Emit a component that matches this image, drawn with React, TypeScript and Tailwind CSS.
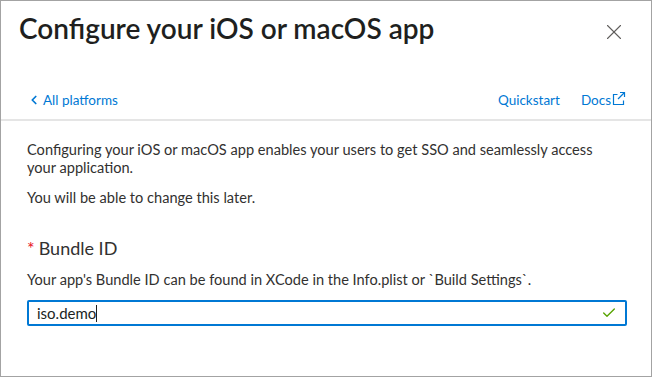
import { Check, ChevronLeft, X } from 'lucide-react';

function ExternalIcon() {
  return (
    <svg width="15" height="15" viewBox="0 0 15 15" fill="none" stroke="currentColor" strokeWidth="1.2">
      <path d="M6.5 3.5H2.5v10h10V9.5" />
      <path d="M9 1.5h4.5V6" />
      <path d="M13.5 1.5L7 8" />
    </svg>
  );
}

export default function App() {
  return (
    <div
      className="w-[652px] h-[377px] border border-[#a3a3a3] bg-white text-[#323130] flex flex-col overflow-hidden"
      style={{ fontFamily: 'Lato, "Open Sans", sans-serif' }}
    >
      <div className="flex items-start justify-between pl-[18px] pr-[24px] pt-[9px]">
        <h1 className="text-[28px] leading-[36px] font-semibold text-[#201f1e]">Configure your iOS or macOS app</h1>
        <X className="mt-[9px] text-[#605e5c]" size={26} strokeWidth={1} />
      </div>
      <div className="flex items-center justify-between pl-[26px] pr-[25px] mt-[45px] text-[13.5px] leading-[18px] text-[#0078d4]">
        <div className="flex items-center gap-[2px]">
          <ChevronLeft size={14} strokeWidth={3} />
          <span>All platforms</span>
        </div>
        <div className="flex items-center gap-[21px]">
          <span>Quickstart</span>
          <span className="flex items-start">
            Docs
            <ExternalIcon />
          </span>
        </div>
      </div>
      <div className="mt-[10px] h-[2px] bg-[#e5e5e5]" />
      <div className="pl-[26px] pr-[20px] pt-[20px] text-[14.6px] leading-[18px]">
        <p className="max-w-[585px]">
          Configuring your iOS or macOS app enables your users to get SSO and seamlessly access your application.
        </p>
        <p className="mt-[12px]">You will be able to change this later.</p>
        <div className="mt-[29px] flex items-baseline text-[18px] leading-[24px]">
          <span className="text-[#e81123] text-[18px] mr-[4px]">*</span>
          <span>Bundle ID</span>
        </div>
        <p className="mt-[11px]">Your app's Bundle ID can be found in XCode in the Info.plist or `Build Settings`.</p>
        <div className="mt-[11px] w-[600px] h-[26px] border-2 border-[#0078d4] rounded-[2px] flex items-center justify-between pl-[8px] pr-[8px]">
          <span className="text-[15px] text-[#201f1e] flex items-center">
            iso.demo<span className="inline-block w-[1px] h-[17px] bg-[#201f1e]" />
          </span>
          <Check size={16} className="text-[#57a300]" strokeWidth={2} />
        </div>
      </div>
    </div>
  );
}
